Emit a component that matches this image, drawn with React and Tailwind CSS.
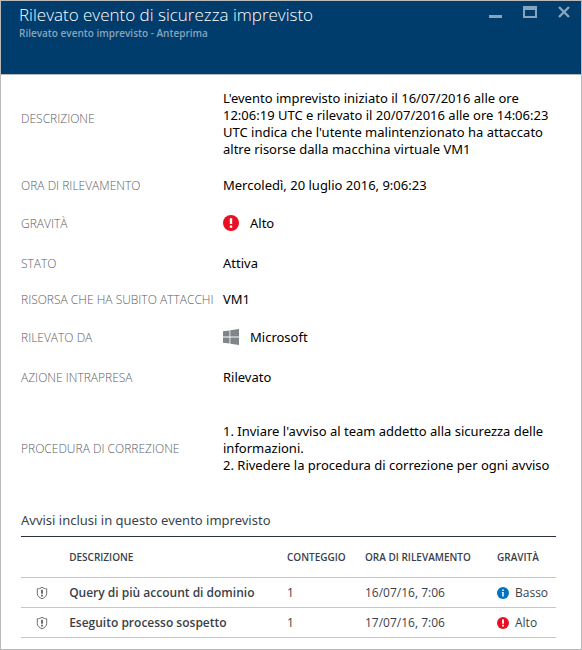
import React from "react";

function AlertIcon({ className }) {
  return (
    <svg viewBox="0 0 16 16" className={className} aria-hidden="true">
      <circle cx="8" cy="8" r="8" fill="#e81123" />
      <path d="M6.8 3.2h2.4v5.8H6.8zM6.8 10.4h2.4v2.3H6.8z" fill="#fff" />
    </svg>
  );
}

function InfoIcon({ className }) {
  return (
    <svg viewBox="0 0 16 16" className={className} aria-hidden="true">
      <circle cx="8" cy="8" r="8" fill="#0072c6" />
      <path d="M7 3.2h2v2H7zM6.4 6.6H9v6H7V8h-.6z" fill="#fff" />
    </svg>
  );
}

function WindowsIcon({ className }) {
  return (
    <svg viewBox="0 0 16 16" className={className} aria-hidden="true">
      <path
        d="M0 2.3L6.5 1.4V7.6H0zM7.3 1.2L16 0V7.6H7.3zM0 8.5h6.5v6.1L0 13.7zM7.3 8.5H16V16l-8.7-1.2z"
        fill="#7f858a"
      />
    </svg>
  );
}

function ShieldIcon({ className }) {
  return (
    <svg viewBox="0 0 12 14" className={className} aria-hidden="true">
      <path
        d="M6 1.2C4.8 2.2 3 2.8 1.3 2.8V7.4c0 2.6 2 4.2 4.7 5.4 2.7-1.2 4.7-2.8 4.7-5.4V2.8C9 2.8 7.2 2.2 6 1.2z"
        fill="none"
        stroke="#6a6e73"
        strokeWidth="1"
      />
      <path d="M5.2 3.8h1.6v4H5.2zM5.2 8.8h1.6v1.6H5.2z" fill="#4a4e55" />
    </svg>
  );
}

function Row({ label, className, children }) {
  return (
    <div className={`flex items-center ${className}`}>
      <dt className="w-[202px] shrink-0 whitespace-nowrap font-['Open_Sans',sans-serif] text-[12px] font-light text-[#5c6066]">{label}</dt>
      <dd className="flex min-w-0 flex-1 items-center text-[13px]">{children}</dd>
    </div>
  );
}

const alerts = [
  { name: "Query di più account di dominio", count: 1, time: "16/07/16, 7:06", severity: "Basso", Icon: InfoIcon },
  { name: "Eseguito processo sospetto", count: 1, time: "17/07/16, 7:06", severity: "Alto", Icon: AlertIcon },
];

export default function App() {
  return (
    <main className="border border-[#bababa] bg-white pb-[11px] font-['Noto_Sans','Open_Sans',sans-serif] leading-[17px] text-black">
      <header className="flex h-[74px] items-start justify-between border-b border-[#b4b8bc] bg-[#003c6c] pl-[18px] pr-[10px]">
        <div className="pt-1">
          <h1 className="font-['Open_Sans',sans-serif] text-[17px] font-light leading-5 text-white">
            Rilevato evento di sicurezza imprevisto
          </h1>
          <p className="font-['Open_Sans',sans-serif] text-[10px] font-semibold text-[#86a5bd]">
            Rilevato evento imprevisto - Anteprima
          </p>
        </div>
        <div className="flex gap-5 pt-1 text-[#86a5bd]">
          <button type="button" aria-label="Riduci a icona">
            <svg viewBox="0 0 14 14" className="size-[14px]"><path d="M0 10h13v3H0z" fill="currentColor" /></svg>
          </button>
          <button type="button" aria-label="Ingrandisci">
            <svg viewBox="0 0 14 14" className="size-[14px]">
              <path fillRule="evenodd" d="M0 1h14v12H0zM2 5v6h10V5z" fill="currentColor" />
            </svg>
          </button>
          <button type="button" aria-label="Chiudi">
            <svg viewBox="0 0 14 14" className="size-[14px]">
              <path d="M2 2l10 10M12 2L2 12" stroke="currentColor" strokeWidth="2.4" />
            </svg>
          </button>
        </div>
      </header>

      <dl className="px-5 pt-[15px]">
        <div className="flex items-start pb-[9px]">
          <dt className="w-[202px] shrink-0 pt-5 font-['Open_Sans',sans-serif] text-[12px] font-light text-[#5c6066]">DESCRIZIONE</dt>
          <dd className="min-w-0 flex-1 text-[13px]">
            L'evento imprevisto iniziato il 16/07/2016 alle ore 12:06:19 UTC e rilevato il 20/07/2016 alle ore 14:06:23
            UTC indica che l'utente malintenzionato ha attaccato altre risorse dalla macchina virtuale VM1
          </dd>
        </div>
        <Row label="ORA DI RILEVAMENTO" className="h-9">Mercoledì, 20 luglio 2016, 9:06:23</Row>
        <Row label="GRAVITÀ" className="h-10">
          <AlertIcon className="mr-[11px] size-4" />
          Alto
        </Row>
        <Row label="STATO" className="h-10">Attiva</Row>
        <Row label="RISORSA CHE HA SUBITO ATTACCHI" className="h-8">VM1</Row>
        <Row label="RILEVATO DA" className="h-11">
          <WindowsIcon className="mr-[11px] size-4" />
          Microsoft
        </Row>
        <Row label="AZIONE INTRAPRESA" className="h-9">Rilevato</Row>
        <Row label="PROCEDURA DI CORREZIONE" className="pt-7">
          <ol className="list-inside list-decimal">
            <li>Inviare l'avviso al team addetto alla sicurezza delle informazioni.</li>
            <li>Rivedere la procedura di correzione per ogni avviso</li>
          </ol>
        </Row>
      </dl>

      <section className="pl-5 pr-[25px] pt-[38px]">
        <h2 className="pb-[7px] text-[13px] text-[#3b3f4a]">Avvisi inclusi in questo evento imprevisto</h2>
        <table className="w-full table-fixed border-collapse border-t border-[#2b3040] text-left font-['Open_Sans',sans-serif] text-[12px] text-[#3b3f4a]">
          <colgroup>
            <col className="w-[9%]" />
            <col />
            <col className="w-[78px]" />
            <col className="w-[132px]" />
            <col className="w-[59px]" />
          </colgroup>
          <thead>
            <tr className="h-[41px] border-b border-[#c6c6c6] text-[10px]">
              <th aria-label="Tipo" />
              <th className="font-semibold">DESCRIZIONE</th>
              <th className="font-semibold">CONTEGGIO</th>
              <th className="font-semibold">ORA DI RILEVAMENTO</th>
              <th className="font-semibold">GRAVITÀ</th>
            </tr>
          </thead>
          <tbody>
            {alerts.map(({ name, count, time, severity, Icon }) => (
              <tr key={name} className="h-[30px] border-b border-[#c6c6c6]">
                <td><ShieldIcon className="ml-[15px] h-[14px] w-3" /></td>
                <td className="whitespace-nowrap font-semibold">{name}</td>
                <td>{count}</td>
                <td>{time}</td>
                <td>
                  <span className="flex items-center gap-[6px]">
                    <Icon className="size-3 shrink-0" />
                    {severity}
                  </span>
                </td>
              </tr>
            ))}
          </tbody>
        </table>
      </section>
    </main>
  );
}
